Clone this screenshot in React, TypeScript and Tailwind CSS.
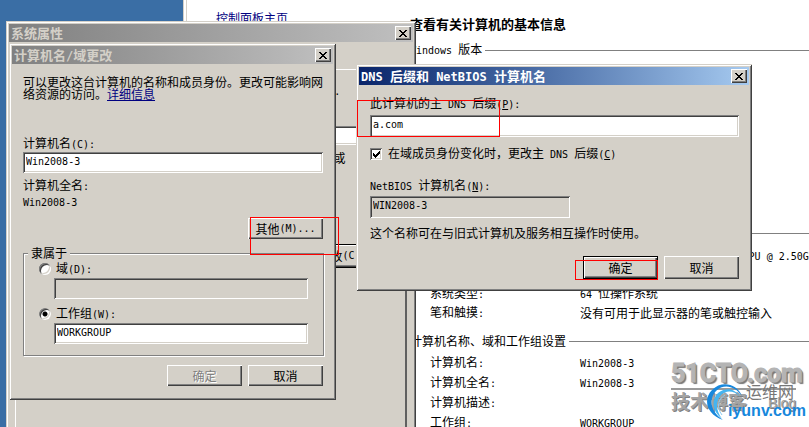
import type { ComponentProps, ReactNode } from "react";
import { clsx } from "clsx";

const RAISED = "shadow-[inset_1px_1px_0_#fff,inset_-1px_-1px_0_#404040,inset_-2px_-2px_0_#808080]";
const SUNKEN = "shadow-[inset_1px_1px_0_#808080,inset_-1px_-1px_0_#fff,inset_2px_2px_0_#404040,inset_-2px_-2px_0_#d4d0c8]";

// Splits latin runs out so they get the half-width face; "&" marks the access key.
function Label({ children, bold = false }: { children: string; bold?: boolean }) {
  const parts = children.split(/([\x20-\x7e]+)/).filter(Boolean);
  return (
    <>
      {parts.map((part, index) => {
        if (!/^[\x20-\x7e]/.test(part)) return <span key={index}>{part}</span>;
        const [before, after] = part.split("&");
        return (
          <span key={index} className={clsx("font-['DejaVu_Sans_Mono',monospace]", bold ? "text-[12px]" : "text-[10px]")}>
            {before}
            {after ? <u>{after[0]}</u> : null}
            {after ? after.slice(1) : null}
          </span>
        );
      })}
    </>
  );
}

function Dialog({
  title,
  active = false,
  className,
  children,
}: {
  title: string;
  active?: boolean;
  className: string;
  children: ReactNode;
}) {
  return (
    <section
      role="dialog"
      aria-label={title}
      className={clsx(
        "absolute flex flex-col bg-[#d4d0c8] p-[3px] shadow-[inset_1px_1px_0_#d4d0c8,inset_-1px_-1px_0_#404040,inset_2px_2px_0_#fff,inset_-2px_-2px_0_#808080]",
        className,
      )}
    >
      <header
        className={clsx(
          "flex h-[18px] shrink-0 items-center justify-between bg-linear-to-r px-[2px] text-[13px] leading-[18px] font-bold",
          active ? "from-[#0a246a] to-[#a6caf0] text-white" : "from-[#808080] to-[#c0c0c0] text-[#d4d0c8]",
        )}
      >
        <h2>
          <Label bold>{title}</Label>
        </h2>
        <button type="button" aria-label="关闭" className={clsx("flex h-[14px] w-4 items-center justify-center bg-[#d4d0c8]", RAISED)}>
          <svg width="8" height="7" viewBox="0 0 8 7" shapeRendering="crispEdges" fill="#000">
            <path d="M0 0h2v1h1v1h2v-1h1v-1h2v1h-1v1h-1v1h-1v1h1v1h1v1h1v1h-2v-1h-1v-1h-2v1h-1v1h-2v-1h1v-1h1v-1h1v-1h-1v-1h-1v-1h-1z" />
          </svg>
        </button>
      </header>
      {children}
    </section>
  );
}

function TextBox({ className, ...props }: ComponentProps<"input">) {
  return (
    <input
      type="text"
      className={clsx(
        "block bg-white px-[3px] pb-[3px] font-['DejaVu_Sans_Mono',monospace] text-[10px] outline-none read-only:bg-[#d4d0c8] disabled:bg-[#d4d0c8]",
        SUNKEN,
        className,
      )}
      {...props}
    />
  );
}

function PushButton({ children, isDefault = false, disabled = false, className = "h-[21px]" }: {
  children: string;
  isDefault?: boolean;
  disabled?: boolean;
  className?: string;
}) {
  return (
    <button
      type="button"
      disabled={disabled}
      className={clsx(
        "flex w-[75px] items-center justify-center bg-[#d4d0c8] whitespace-pre",
        RAISED,
        isDefault && "border border-black",
        disabled && "text-[#808080] [text-shadow:1px_1px_0_#fff]",
        className,
      )}
    >
      <Label>{children}</Label>
    </button>
  );
}

function Radio({ id, label, defaultChecked }: { id: string; label: string; defaultChecked?: boolean }) {
  return (
    <div className="flex h-4 items-center gap-[5px]">
      <input
        id={id}
        type="radio"
        name="member"
        defaultChecked={defaultChecked}
        className="size-3 appearance-none rounded-full bg-white shadow-[inset_1px_1px_0_#808080,inset_-1px_-1px_0_#fff,inset_2px_2px_0_#404040,inset_-2px_-2px_0_#d4d0c8] checked:bg-[radial-gradient(circle,#000_2px,#fff_3px)]"
      />
      <label htmlFor={id}>
        <Label>{label}</Label>
      </label>
    </div>
  );
}

function SectionTitle({ children }: { children: string }) {
  return (
    <h3 className="flex h-5 items-center gap-[3px]">
      <span>
        <Label>{children}</Label>
      </span>
      <span className="h-px flex-1 bg-[#808080]" />
    </h3>
  );
}

function InfoRow({ name, value, className }: { name: string; value: string; className: string }) {
  return (
    <div className={clsx("flex items-center pl-5 whitespace-pre", className)}>
      <dt className="w-[150px] shrink-0">
        <Label>{name}</Label>
      </dt>
      <dd>
        <Label>{value}</Label>
      </dd>
    </div>
  );
}

function SystemInfoWindow() {
  return (
    <main className="absolute inset-y-0 right-0 left-[183px] flex overflow-hidden border-l-4 border-double border-[#d4d0c8] bg-white">
      <nav className="w-[223px] shrink-0 pt-[10px] pl-[29px]">
        <a href="#home" className="text-[#000080] underline">控制面板主页</a>
      </nav>
      <div className="min-w-0 flex-1 pt-[14px]">
        <h1 className="h-5 text-[13px] leading-5 font-bold">查看有关计算机的基本信息</h1>
        <section className="mt-[6px] min-h-[183px]">
          <SectionTitle>Windows 版本</SectionTitle>
        </section>
        <section>
          <SectionTitle>系统</SectionTitle>
          <dl className="pt-[3px]">
            <InfoRow className="h-[19px]" name="处理器:" value="Intel(R) Core(TM) i5-3210M CPU @ 2.50GHz" />
            <InfoRow className="h-[19px]" name="内存(RAM):" value="2.00 GB" />
            <InfoRow className="h-[19px]" name="系统类型:" value="64 位操作系统" />
            <InfoRow className="h-[19px]" name="笔和触摸:" value="没有可用于此显示器的笔或触控输入" />
          </dl>
        </section>
        <section className="mt-[9px]">
          <SectionTitle>计算机名称、域和工作组设置</SectionTitle>
          <dl className="pt-[2px]">
            <InfoRow className="h-5" name="计算机名:" value="Win2008-3" />
            <InfoRow className="h-5" name="计算机全名:" value="Win2008-3" />
            <InfoRow className="h-5" name="计算机描述:" value="" />
            <InfoRow className="h-5" name="工作组:" value="WORKGROUP" />
          </dl>
        </section>
      </div>
    </main>
  );
}

function SystemPropertiesDialog() {
  return (
    <Dialog title="系统属性" className="top-[21px] -bottom-10 left-[6px] w-[410px]">
      <div className="mx-[6px] mt-[27px] flex flex-1 flex-col border-t border-r-2 border-l border-t-white border-r-[#606060] border-l-white px-[13px] pt-3 whitespace-pre">
        <p className="h-4 pl-[53px] leading-4">
          <Label>Windows 使用以下信息在网络中标识这台计算机.</Label>
        </p>
        <TextBox aria-label="计算机描述" className="mt-7 ml-[90px] h-[19px] w-[270px]" />
        <p className="mt-[5px] h-4 pl-[124px] leading-4">
          <Label>举例: "IIS Production Server" 或</Label>
        </p>
        <PushButton isDefault className="mt-[78px] ml-[282px] h-6">更改(C)...</PushButton>
      </div>
    </Dialog>
  );
}

function ComputerNameDialog() {
  return (
    <Dialog title="计算机名/域更改" className="top-[43px] left-[9px] w-[327px]">
      <div className="flex flex-col pt-3 pr-[10px] pb-[11px] pl-[11px] leading-4">
        <p className="leading-3 whitespace-nowrap">
          可以更改这台计算机的名称和成员身份。更改可能影响网
          <br />
          络资源的访问。
          <a href="#details" className="text-[#000080] underline">详细信息</a>
        </p>
        <label htmlFor="computer-name" className="mt-[35px] h-4">
          <Label>计算机名(C):</Label>
        </label>
        <TextBox id="computer-name" defaultValue="Win2008-3" className="mt-px h-[21px] w-full" />
        <p className="mt-1 h-4">
          <Label>计算机全名:</Label>
        </p>
        <p className="h-4">
          <Label>Win2008-3</Label>
        </p>
        <div className="mt-[9px] flex justify-end">
          <PushButton>其他(M)...</PushButton>
        </div>
        <fieldset className="mt-[6px] border border-[#808080] shadow-[1px_1px_0_#fff,inset_1px_1px_0_#fff]">
          <legend className="ml-1 h-4 bg-[#d4d0c8] px-[3px]">隶属于</legend>
          <div className="px-[15px] pb-[11px]">
            <Radio id="member-domain" label="域(D):" />
            <TextBox aria-label="域" disabled className="mt-px ml-[15px] h-[21px] w-[254px]" />
            <div className="mt-[7px]">
              <Radio id="member-workgroup" label="工作组(W):" defaultChecked />
            </div>
            <TextBox aria-label="工作组" defaultValue="WORKGROUP" className="mt-px ml-[15px] h-[21px] w-[254px]" />
          </div>
        </fieldset>
        <div className="mt-[9px] flex justify-end gap-[6px]">
          <PushButton disabled>确定</PushButton>
          <PushButton>取消</PushButton>
        </div>
      </div>
    </Dialog>
  );
}

function DnsSuffixDialog() {
  return (
    <Dialog active title="DNS 后缀和 NetBIOS 计算机名" className="top-[64px] left-[356px] w-[396px]">
      <div className="flex flex-col pt-[10px] pr-[10px] pb-[9px] pl-[11px] leading-4">
        <label htmlFor="dns-suffix" className="h-4">
          <Label>此计算机的主 DNS 后缀(&P):</Label>
        </label>
        <TextBox id="dns-suffix" defaultValue="a.com" className="mt-1 h-[22px] w-full" />
        <div className="mt-[9px] flex h-4 items-center gap-[6px]">
          <span className="grid">
            <input
              id="change-suffix"
              type="checkbox"
              defaultChecked
              className={clsx("peer col-start-1 row-start-1 size-3 appearance-none bg-white", SUNKEN)}
            />
            <svg width="12" height="12" viewBox="0 0 12 12" shapeRendering="crispEdges" className="pointer-events-none col-start-1 row-start-1 hidden peer-checked:block">
              <path d="M3 5h1v1h1v1h1v-1h1v-1h1v-1h1v-1h1v3h-1v1h-1v1h-1v1h-1v1h-1v-1h-1v-1h-1z" />
            </svg>
          </span>
          <label htmlFor="change-suffix">
            <Label>在域成员身份变化时，更改主 DNS 后缀(&C)</Label>
          </label>
        </div>
        <label htmlFor="netbios-name" className="mt-[15px] h-4">
          <Label>NetBIOS 计算机名(&N):</Label>
        </label>
        <TextBox id="netbios-name" readOnly defaultValue="WIN2008-3" className="mt-[3px] h-[22px] w-[200px]" />
        <p className="mt-[7px] h-4">这个名称可在与旧式计算机及服务相互操作时使用。</p>
        <div className="mt-[15px] flex justify-end gap-[6px]">
          <PushButton isDefault className="h-[23px]">确定</PushButton>
          <PushButton className="h-[23px]">取消</PushButton>
        </div>
      </div>
    </Dialog>
  );
}

function Watermark() {
  return (
    <div className="pointer-events-none absolute top-[358px] left-[671px] w-[134px] font-['Liberation_Sans','Noto_Sans_CJK_SC',sans-serif] whitespace-nowrap text-[#b4b4b4]">
      <p className="h-8 w-[125px] border-b-2 border-[#9a9a9a] font-['Roboto',sans-serif] text-[25px] leading-[31px] font-bold [-webkit-text-stroke:1px_#b4b4b4] [text-shadow:1px_1px_0_#808080,2px_2px_1px_#777]">
        51CTO.com
      </p>
      <div className="flex h-[26px] items-center justify-between pr-[9px] text-[19px] font-bold text-[#a4a4a4] [text-shadow:1px_1px_0_#808080]">
        <span>技术博客</span>
        <span className="text-[14px] font-normal">Blog</span>
      </div>
      <svg width="42" height="42" viewBox="0 0 42 42" fill="none" className="absolute top-[23px] left-[34px]">
        <path d="M37 15C32 3 17 -1 7 9C-2 18 1 33 18 39C6 31 3 19 11 10C19 2 30 5 37 15Z" fill="#1787dc" />
        <path d="M35 16C30 7 20 6 13 12C6 19 7 30 17 38C11 29 10 21 16 14C21 9 29 9 35 16Z" fill="#45b4f0" />
        <path d="M20 14C13 18 11 26 17 34" stroke="#8ccdf5" />
      </svg>
      <span className="absolute top-[25px] left-[75px] text-[16px] leading-5 text-[#777]">运维网</span>
      <span className="absolute top-[43px] left-[57px] text-[16px] leading-5 font-bold text-[#1787dc]">iyunv.com</span>
    </div>
  );
}

function Highlight({ className }: { className: string }) {
  return <div className={clsx("pointer-events-none absolute border border-[#ff0000]", className)} />;
}

export default function App() {
  return (
    <div className="relative h-screen w-full overflow-hidden bg-[#3a6ea5] font-['Noto_Sans_CJK_SC',sans-serif] text-[12px] leading-4 whitespace-pre-wrap text-black">
      <SystemInfoWindow />
      <SystemPropertiesDialog />
      <ComputerNameDialog />
      <DnsSuffixDialog />
      <Highlight className="top-[217px] left-[250px] h-[38px] w-[89px]" />
      <Highlight className="top-[100px] left-[357px] h-[37px] w-[143px]" />
      <Highlight className="top-[260px] left-[575px] h-5 w-[83px]" />
      <Watermark />
    </div>
  );
}
